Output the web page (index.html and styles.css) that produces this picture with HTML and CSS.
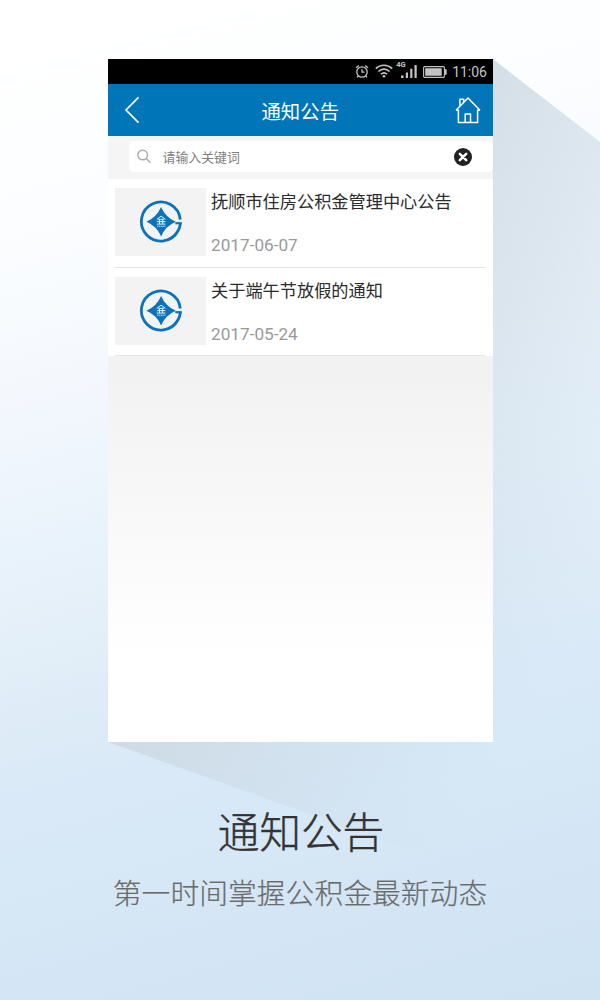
FILE: index.html
```html
<!DOCTYPE html>
<html lang="zh-CN">
<head>
<meta charset="utf-8">
<title>通知公告</title>
<link rel="stylesheet" href="styles.css">
</head>
<body>
<svg width="0" height="0" class="defs">
  <symbol id="logo" viewBox="0 0 44 44">
    <path d="M41.300 19.500A19.500 19.500 0 1 0 39.200 30.500Q41 27.500 41.400 23.200" fill="none" stroke="#0a73bb" stroke-width="2.800"/>
    <path d="M36.300 23.200H42.800" fill="none" stroke="#0a73bb" stroke-width="2.200"/>
    <path d="M22.100 7Q26.500 17.300 36.800 21.700Q26.500 26.100 22.100 36.400Q17.700 26.100 7.400 21.700Q17.700 17.300 22.100 7Z" fill="#0a73bb"/>
    <path d="M17.800 19.300L22.100 16.200L26.400 19.300M19 19.300H25.200M17.800 21.600H26.400M20.500 19.500V24M23.700 19.500V24M17.800 24.100H26.400" fill="none" stroke="#fff" stroke-width=".9"/>
    <path d="M18 26.300H26.400" fill="none" stroke="#d5e8f5" stroke-width="1.100" stroke-dasharray="1.300 .5"/>
  </symbol>
</svg>
<main class="page">
  <svg class="shadow" viewBox="0 0 600 1000">
    <defs>
      <linearGradient id="cast" gradientUnits="userSpaceOnUse" x1="300" y1="400" x2="605" y2="572">
        <stop offset="0" stop-color="#ccd8e2" stop-opacity=".84"/>
        <stop offset=".38" stop-color="#ccdae5" stop-opacity=".6"/>
        <stop offset=".65" stop-color="#ccdce9" stop-opacity=".36"/>
        <stop offset="1" stop-color="#ccdeee" stop-opacity="0"/>
      </linearGradient>
    </defs>
    <path d="M493 59L600 142V918L108 742Z" fill="url(#cast)"/>
  </svg>
  <section class="phone">
    <div class="status">
      <svg class="alarm" width="14" height="15" viewBox="0 0 14 15" fill="none" stroke="#c4c4c4" stroke-width="1.300">
        <circle cx="7" cy="8" r="5.200"/><path d="M1 3.700L3.800 1.400M13 3.700L10.200 1.400M7 5.200V8.200H9.600M3.200 12L2 13.400M10.800 12L12 13.400"/>
      </svg>
      <svg class="wifi" width="18" height="14" viewBox="0 0 18 14" fill="none" stroke="#c4c4c4" stroke-width="1.700">
        <path d="M.8 4.700C5.500 .1 12.500 .1 17.200 4.700M3.400 7.500C6.700 4.400 11.300 4.400 14.600 7.500M6 10.200C7.800 8.500 10.200 8.500 12 10.200"/><circle cx="9" cy="12.200" r="1.300" fill="#c4c4c4" stroke="none"/>
      </svg>
      <div class="cell">
        <span class="net">4G</span>
        <svg width="16" height="14" viewBox="0 0 16 14" fill="#c4c4c4"><path d="M0 11.400H2.500V14H0zM4.800 8.400H7V14H4.800zM9.200 4.700H11.400V14H9.200zM13.500 1H15.700V14H13.500z"/></svg>
      </div>
      <svg class="battery" width="24" height="12" viewBox="0 0 24 12"><rect x=".6" y=".6" width="20.800" height="10.800" rx="1.200" fill="none" stroke="#c4c4c4" stroke-width="1.100"/><path d="M2.200 2.300H18.700V9.700H2.200zM22 3.300H23.700V8.700H22z" fill="#c4c4c4"/></svg>
      <span class="time">11:06</span>
    </div>
    <header class="bar">
      <svg width="16" height="28" viewBox="0 0 16 28" fill="none" stroke="#fff" stroke-width="1.700"><path d="M14.500 1.300L2 14L14.500 26.700"/></svg>
      <h1 class="bar-title">通知公告</h1>
      <svg width="26" height="28" viewBox="0 0 26 28" fill="none" stroke="#fff" stroke-width="1.500" stroke-linejoin="round"><path d="M1 14.300L13 2L25 14.300M1 14.300H3.400V26.600H22.600V14.300H25M4.900 10V3.300H8.700V6M10.200 26V18H15.500V26"/></svg>
    </header>
    <div class="search">
      <div class="field">
        <svg width="15" height="15" viewBox="0 0 15 15" fill="none" stroke="#aaa" stroke-width="1.400"><circle cx="5.700" cy="6" r="4.800"/><path d="M9.300 9.500L13.300 13.700"/></svg>
        <span class="hint">请输入关键词</span>
        <svg width="18" height="18" viewBox="0 0 18 18"><circle cx="9" cy="9" r="9" fill="#222"/><path d="M5.800 5.800L12.200 12.200M12.200 5.800L5.800 12.200" stroke="#fff" stroke-width="2.500" stroke-linecap="round"/></svg>
      </div>
    </div>
    <div class="list">
      <article class="item">
        <div class="thumb"><svg width="44" height="44"><use href="#logo"/></svg></div>
        <div class="info"><h2 class="name">抚顺市住房公积金管理中心公告</h2><time class="date">2017-06-07</time></div>
      </article>
      <article class="item">
        <div class="thumb"><svg width="44" height="44"><use href="#logo"/></svg></div>
        <div class="info"><h2 class="name">关于端午节放假的通知</h2><time class="date">2017-05-24</time></div>
      </article>
    </div>
  </section>
  <p class="caption">通知公告</p>
  <p class="sub">第一时间掌握公积金最新动态</p>
</main>
</body>
</html>
```
FILE: styles.css
```css
* { box-sizing: border-box; }
body, h1, h2, p { margin: 0; }
body { font-family: "Noto Sans CJK SC", sans-serif; }
svg { display: block; flex: none; }
.defs { position: absolute; }
.page {
  position: relative;
  width: 600px;
  height: 1000px;
  padding-top: 58.5px;
  overflow: hidden;
  background: linear-gradient(165deg, #fff 0%, #fdfeff 15%, #f8fbfe 27%, #f1f6fd 39%, #e9f3fb 48%, #dfecf7 62%, #d9e9f7 70%, #d4e6f5 86%, #d0e3f3 100%);
}
.shadow { position: absolute; left: 0; top: 0; width: 600px; height: 1000px; }
.phone {
  position: relative;
  display: flex;
  flex-direction: column;
  width: 385px;
  height: 683.5px;
  margin-left: 108px;
  background: linear-gradient(#f2f2f2 46%, #fff 88%);
}
.status {
  display: flex;
  align-items: center;
  justify-content: flex-end;
  height: 25.5px;
  padding-right: 6px;
  background: #000;
}
.wifi { margin-left: 6px; }
.cell { display: flex; position: relative; margin: 0 0 0 8px; }
.net {
  position: absolute;
  left: -5px;
  top: -3px;
  font: bold 7.5px/8px Roboto, sans-serif;
  color: #c4c4c4;
}
.battery { margin: 1px 0 0 6px; }
.time { margin: 2px 0 0 5px; font: 14px/20px Roboto, sans-serif; color: #c4c4c4; }
.bar {
  display: flex;
  align-items: center;
  justify-content: space-between;
  height: 52px;
  padding: 0 12.5px 0 16px;
  background: #0075b8;
}
.bar-title {
  padding: 1px 0 0 6px;
  font-size: 19.4px;
  font-weight: 400;
  line-height: 28px;
  color: #fff;
}
.search { height: 43px; padding: 5px 0 7px 21px; background: #f5f5f5; }
.field {
  display: flex;
  align-items: center;
  height: 31px;
  padding: 0 21px 0 8px;
  background: #fff;
  border-radius: 5px;
}
.hint { flex: 1; margin-left: 10.5px; font-size: 12.9px; line-height: 20px; color: #808080; }
.list { background: #fff; }
.item {
  display: flex;
  height: 89px;
  margin: 0 8px 0 7px;
  padding-top: 9px;
  border-bottom: 1px solid #e6e6e6;
}
.item:last-child { height: 88px; }
.thumb {
  display: flex;
  align-items: center;
  justify-content: center;
  width: 91px;
  height: 68px;
  background: #f3f3f3;
}
.info { display: flex; flex-direction: column; padding-left: 5px; }
.name { font-size: 17.2px; font-weight: 400; line-height: 26px; color: #2b2b2b; }
.date { margin-top: 21px; font: 17.2px/20px Roboto, sans-serif; color: #999; }
.caption, .sub { position: relative; text-align: center; font-weight: 300; }
.caption { margin-top: 58px; padding-left: 2px; font-size: 41.6px; line-height: 60px; color: #333; -webkit-text-stroke: .4px #333; }
.sub { margin-top: 12px; font-size: 28.8px; line-height: 40px; color: #6b6b6b; -webkit-text-stroke: .2px #6b6b6b; }
```
